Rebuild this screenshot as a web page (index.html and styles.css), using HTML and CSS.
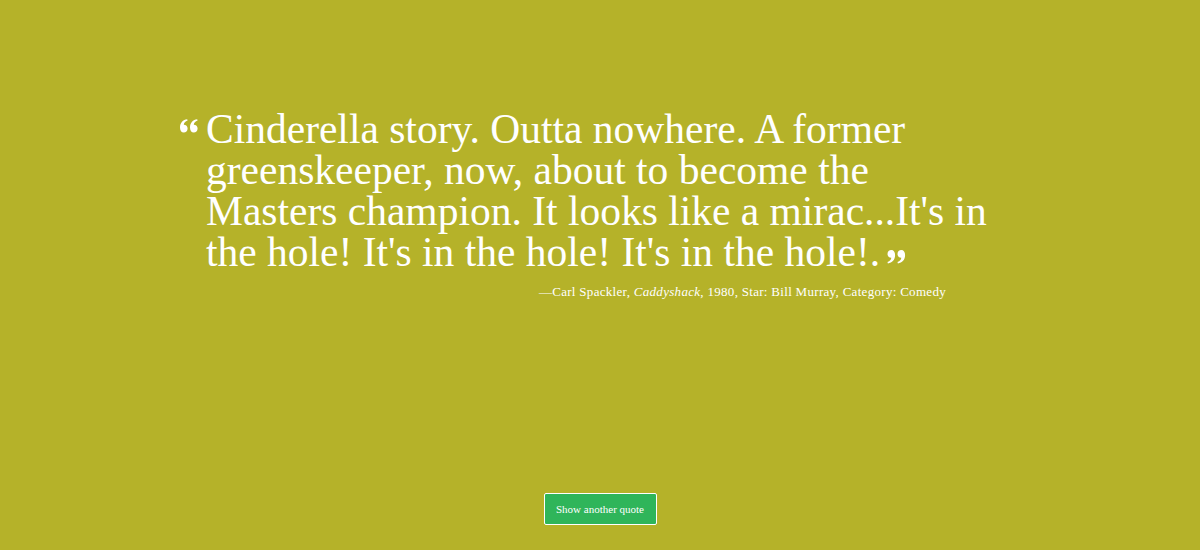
FILE: index.html
```html
<!DOCTYPE html>
<html lang="en">
<head>
<meta charset="utf-8">
<title>Random Quote</title>
<link rel="stylesheet" href="styles.css">
</head>
<body>
<main class="page">
  <section class="quote-box">
    <blockquote class="quote">
      <svg class="q-open" viewBox="0 0 18 14" aria-hidden="true"><path d="M0 8.5C0 3.5 3 0.8 7.2 0.2L7.6 1.6C5.2 2.4 4 3.8 3.8 5.8C6 5.8 7.6 7.2 7.6 9.6C7.6 12.1 5.9 13.6 3.8 13.6C1.4 13.6 0 11.6 0 8.5ZM10 8.5C10 3.5 13 0.8 17.2 0.2L17.6 1.6C15.2 2.4 14 3.8 13.8 5.8C16 5.8 17.6 7.2 17.6 9.6C17.6 12.1 15.9 13.6 13.8 13.6C11.4 13.6 10 11.6 10 8.5Z"/></svg>
      <p class="text">Cinderella story. Outta nowhere. A former<br>greenskeeper, now, about to become the<br>Masters champion. It looks like a mirac...It's in<br>the hole! It's in the hole! It's in the hole!.<svg class="q-close" viewBox="0 0 18 14" aria-hidden="true"><path d="M17.6 5.1C17.6 10.1 14.6 12.8 10.4 13.4L10 12C12.4 11.2 13.6 9.8 13.8 7.8C11.6 7.8 10 6.4 10 4C10 1.5 11.7 0 13.8 0C16.2 0 17.6 2 17.6 5.1ZM7.6 5.1C7.6 10.1 4.6 12.8 0.4 13.4L0 12C2.4 11.2 3.6 9.8 3.8 7.8C1.6 7.8 0 6.4 0 4C0 1.5 1.7 0 3.8 0C6.2 0 7.6 2 7.6 5.1Z"/></svg></p>
    </blockquote>
    <p class="author">—Carl Spackler, <cite>Caddyshack</cite>, 1980, Star: Bill Murray, Category: Comedy</p>
  </section>
  <div class="actions">
    <button class="btn" type="button">Show another quote</button>
  </div>
</main>
</body>
</html>
```
FILE: styles.css
```css
* { box-sizing: border-box; }
html, body { margin: 0; padding: 0; }
body {
  background: #b5b229;
  color: #ffffff;
  font-family: "Liberation Serif", "Times New Roman", serif;
}
.page {
  height: 550px;
  display: flex;
  flex-direction: column;
}
.quote-box {
  width: 840px;
  margin: 0 auto;
  padding-top: 109px;
}
.quote {
  margin: 0;
  display: flex;
  align-items: flex-start;
  gap: 8px;
}
.q-open {
  width: 18px;
  height: 14px;
  fill: #ffffff;
  flex: none;
  margin-top: 10px;
}
.text {
  margin: 0;
  font-size: 41.5px;
  line-height: 41px;
  white-space: nowrap;
}
.q-close {
  width: 19px;
  height: 14px;
  fill: #ffffff;
  margin-left: 7px;
  vertical-align: 2px;
}
.author {
  margin: 11px 0 0;
  padding-right: 74px;
  text-align: right;
  font-size: 13px;
  letter-spacing: 0.3px;
}
.author cite { font-style: italic; }
.actions {
  margin-top: auto;
  padding-bottom: 25px;
  display: flex;
  justify-content: center;
}
.btn {
  width: 113px;
  height: 32px;
  background: #2fb55a;
  color: #ffffff;
  border: 1px solid #ffffff;
  border-radius: 2px;
  font-family: "Liberation Serif", "Times New Roman", serif;
  font-size: 11px;
  padding: 0;
  cursor: pointer;
}
```
